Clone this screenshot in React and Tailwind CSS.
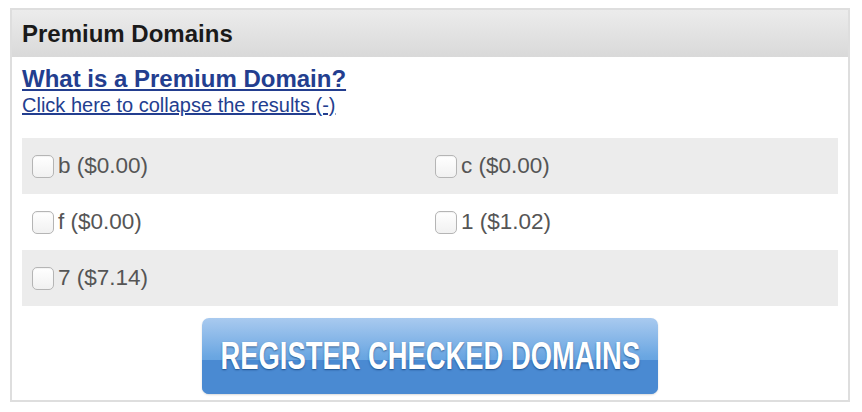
import React, { useState } from "react";

const domains = [
  { name: "b", price: "0.00" },
  { name: "c", price: "0.00" },
  { name: "f", price: "0.00" },
  { name: "1", price: "1.02" },
  { name: "7", price: "7.14" },
];

function DomainCheck({ domain, checked, onToggle }) {
  return (
    <label className="flex items-center cursor-pointer">
      <span
        onClick={onToggle}
        className={`w-[22px] h-[23px] rounded-[5px] border border-[#b5b5b5] bg-gradient-to-b from-white to-[#f1f1f1] shadow-[inset_0_1px_1px_rgba(0,0,0,0.05)] ${
          checked ? "bg-[#dbe8f8]" : ""
        }`}
      />
      <span className="ml-[4px] text-[22.5px] text-[#555]">
        {domain.name} (${domain.price})
      </span>
    </label>
  );
}

export default function App() {
  const [checked, setChecked] = useState({});

  // pair the domains into two-column rows
  const rows = [];
  for (let i = 0; i < domains.length; i += 2) rows.push(domains.slice(i, i + 2));

  return (
    <div
      className="w-[862px] h-[412px] bg-white pt-[8px] pl-[10px]"
      style={{ fontFamily: '"Liberation Sans", Arial, sans-serif' }}
    >
      <div className="w-[840px] h-[394px] border-2 border-[#dedede] flex flex-col">
        {/* Panel header */}
        <div className="h-[47px] bg-gradient-to-b from-[#ececec] to-[#d9d9d9] flex items-center px-[10px]">
          <h2 className="text-[24px] font-bold text-[#1a1a1a]">Premium Domains</h2>
        </div>

        <div className="px-[10px] pt-[7px]">
          <a href="#" className="block text-[24px] leading-[30px] font-bold text-[#233e8f] underline">
            What is a Premium Domain?
          </a>
          <a href="#" className="block text-[20px] leading-[22px] text-[#233e8f] underline">
            Click here to collapse the results (-)
          </a>

          {/* Domain list */}
          <div className="mt-[22px] w-[816px]">
            {rows.map((row, r) => (
              <div
                key={r}
                className={`h-[56px] grid grid-cols-2 items-center pl-[10px] ${r % 2 === 0 ? "bg-[#ececec]" : "bg-white"}`}
              >
                {row.map((d) => (
                  <DomainCheck
                    key={d.name}
                    domain={d}
                    checked={!!checked[d.name]}
                    onToggle={() => setChecked({ ...checked, [d.name]: !checked[d.name] })}
                  />
                ))}
              </div>
            ))}
          </div>

          {/* Register button */}
          <div className="flex justify-center mt-[12px]">
            <button className="relative w-[456px] h-[76px] rounded-[7px] overflow-hidden bg-gradient-to-b from-[#a9caef] via-[#6ba7e2] to-[#4d8dd4] shadow-[0_1px_2px_rgba(0,0,0,0.15)] flex items-center justify-center">
              <span className="absolute inset-x-0 bottom-0 h-[45%] bg-[#4a8ad2]" />
              <span className="relative inline-block text-white font-bold text-[38px] leading-none scale-x-[0.72] whitespace-nowrap [text-shadow:0_1px_2px_rgba(0,40,90,0.6)]">
                REGISTER CHECKED DOMAINS
              </span>
            </button>
          </div>
        </div>
      </div>
    </div>
  );
}
